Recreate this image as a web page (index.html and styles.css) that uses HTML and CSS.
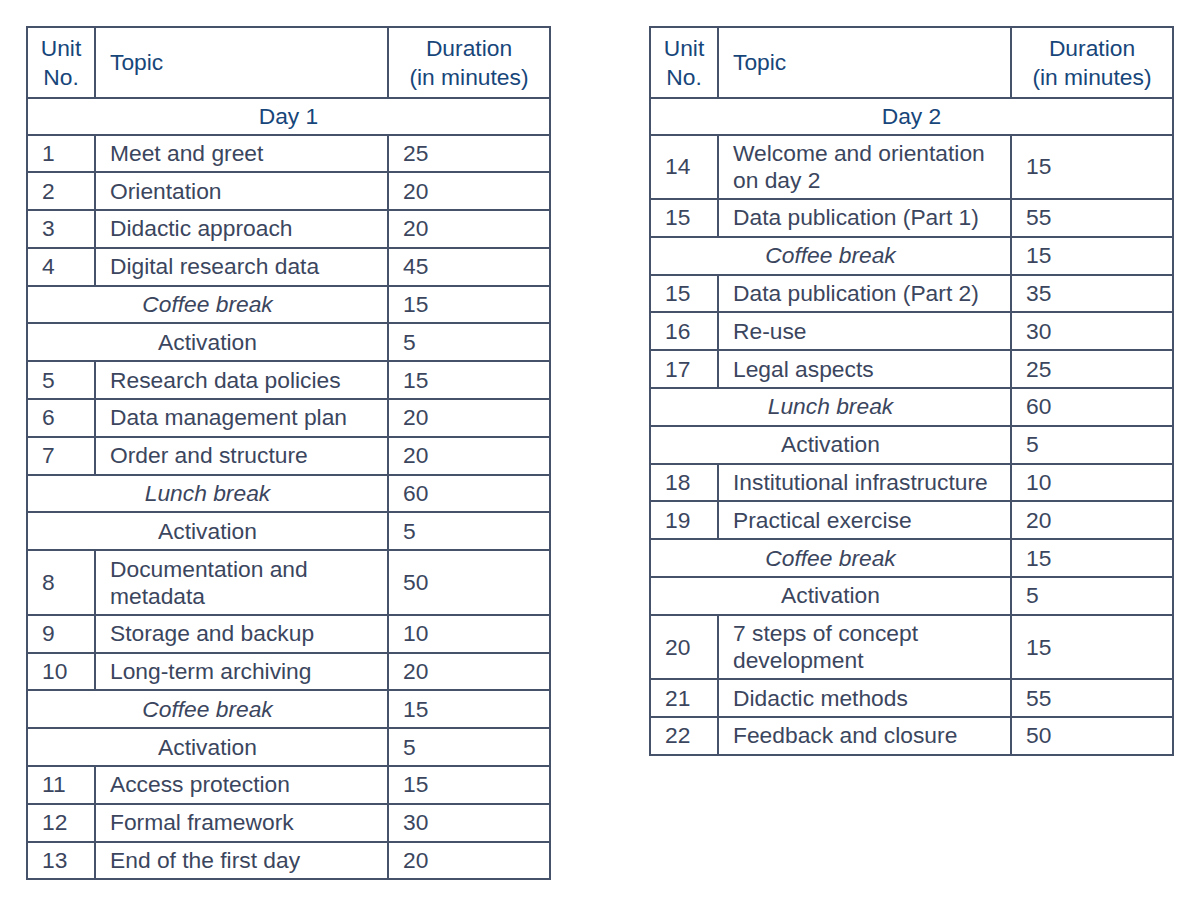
FILE: index.html
```html
<!DOCTYPE html>
<html>
<head>
<meta charset="utf-8">
<link rel="stylesheet" href="styles.css">
</head>
<body>
<div class="page">
  <table class="sched">
    <colgroup><col class="c-unit"><col class="c-topic"><col class="c-dur"></colgroup>
    <tr class="head">
      <th class="center">Unit<br>No.</th>
      <th class="left">Topic</th>
      <th class="center">Duration<br>(in minutes)</th>
    </tr>
    <tr class="day"><th colspan="3" class="center">Day 1</th></tr>
    <tr><td>1</td><td>Meet and greet</td><td>25</td></tr>
    <tr><td>2</td><td>Orientation</td><td>20</td></tr>
    <tr><td>3</td><td>Didactic approach</td><td>20</td></tr>
    <tr><td>4</td><td>Digital research data</td><td>45</td></tr>
    <tr><td colspan="2" class="center italic">Coffee break</td><td>15</td></tr>
    <tr><td colspan="2" class="center">Activation</td><td>5</td></tr>
    <tr><td>5</td><td>Research data policies</td><td>15</td></tr>
    <tr><td>6</td><td>Data management plan</td><td>20</td></tr>
    <tr><td>7</td><td>Order and structure</td><td>20</td></tr>
    <tr><td colspan="2" class="center italic">Lunch break</td><td>60</td></tr>
    <tr><td colspan="2" class="center">Activation</td><td>5</td></tr>
    <tr class="dbl"><td>8</td><td>Documentation and<br>metadata</td><td>50</td></tr>
    <tr><td>9</td><td>Storage and backup</td><td>10</td></tr>
    <tr><td>10</td><td>Long-term archiving</td><td>20</td></tr>
    <tr><td colspan="2" class="center italic">Coffee break</td><td>15</td></tr>
    <tr><td colspan="2" class="center">Activation</td><td>5</td></tr>
    <tr><td>11</td><td>Access protection</td><td>15</td></tr>
    <tr><td>12</td><td>Formal framework</td><td>30</td></tr>
    <tr><td>13</td><td>End of the first day</td><td>20</td></tr>
  </table>

  <table class="sched">
    <colgroup><col class="c-unit"><col class="c-topic"><col class="c-dur"></colgroup>
    <tr class="head">
      <th class="center">Unit<br>No.</th>
      <th class="left">Topic</th>
      <th class="center">Duration<br>(in minutes)</th>
    </tr>
    <tr class="day"><th colspan="3" class="center">Day 2</th></tr>
    <tr class="dbl"><td>14</td><td>Welcome and orientation<br>on day 2</td><td>15</td></tr>
    <tr><td>15</td><td>Data publication (Part 1)</td><td>55</td></tr>
    <tr><td colspan="2" class="center italic">Coffee break</td><td>15</td></tr>
    <tr><td>15</td><td>Data publication (Part 2)</td><td>35</td></tr>
    <tr><td>16</td><td>Re-use</td><td>30</td></tr>
    <tr><td>17</td><td>Legal aspects</td><td>25</td></tr>
    <tr><td colspan="2" class="center italic">Lunch break</td><td>60</td></tr>
    <tr><td colspan="2" class="center">Activation</td><td>5</td></tr>
    <tr><td>18</td><td>Institutional infrastructure</td><td>10</td></tr>
    <tr><td>19</td><td>Practical exercise</td><td>20</td></tr>
    <tr><td colspan="2" class="center italic">Coffee break</td><td>15</td></tr>
    <tr><td colspan="2" class="center">Activation</td><td>5</td></tr>
    <tr class="dbl"><td>20</td><td>7 steps of concept<br>development</td><td>15</td></tr>
    <tr><td>21</td><td>Didactic methods</td><td>55</td></tr>
    <tr><td>22</td><td>Feedback and closure</td><td>50</td></tr>
  </table>
</div>
</body>
</html>
```

FILE: styles.css
```css
html, body {
  margin: 0;
  padding: 0;
  background: #ffffff;
}

.page {
  display: flex;
  align-items: flex-start;
  gap: 98px;
  padding: 26px 0 0 26px;
  font-family: "Liberation Sans", Arial, sans-serif;
  font-size: 22.8px;
  line-height: 27px;
  color: #3b465e;
}

.sched {
  border-collapse: collapse;
  table-layout: fixed;
  width: 523px;
  border: 2px solid #46526a;
}

.c-unit { width: 68px; }
.c-topic { width: 293px; }
.c-dur { width: 162px; }

.sched td,
.sched th {
  border: 2px solid #46526a;
  padding: 0 0 0 14px;
  text-align: left;
  vertical-align: middle;
  font-weight: normal;
  white-space: nowrap;
}

.sched tr { height: 37.8px; }
.sched tr.head { height: 71px; }
.sched tr.day { height: 36.5px; }
.sched tr.dbl { height: 64.5px; }

.sched th {
  color: #17467a;
  line-height: 29px;
}

.sched .center {
  text-align: center;
  padding: 0;
}

.sched .italic {
  font-style: italic;
}
```
